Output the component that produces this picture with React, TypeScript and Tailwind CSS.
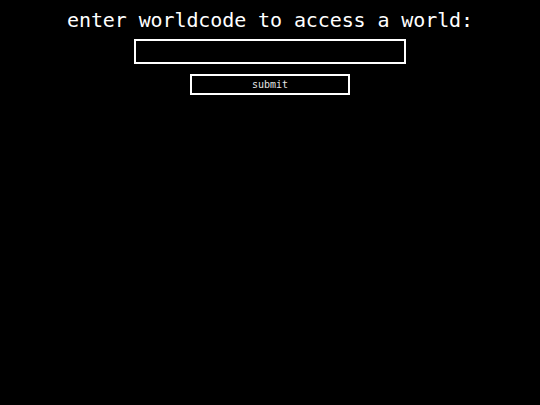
import React from "react";

export default function App() {
  return (
    <div className="w-[540px] h-[405px] bg-black flex flex-col items-center text-white" style={{ fontFamily: '"DejaVu Sans Mono", "Liberation Mono", monospace' }}>
      <h1 className="mt-[8px] text-[20px] leading-[24px] tracking-[-0.1px]">enter worldcode to access a world:</h1>
      <input type="text" className="mt-[7px] w-[272px] h-[25px] border-2 border-white bg-black outline-none text-white px-1 text-[12px]" />
      <button className="mt-[10px] w-[160px] h-[21px] border-2 border-white bg-black text-[#e5e5e5] text-[10px] leading-[17px]">submit</button>
    </div>
  );
}
